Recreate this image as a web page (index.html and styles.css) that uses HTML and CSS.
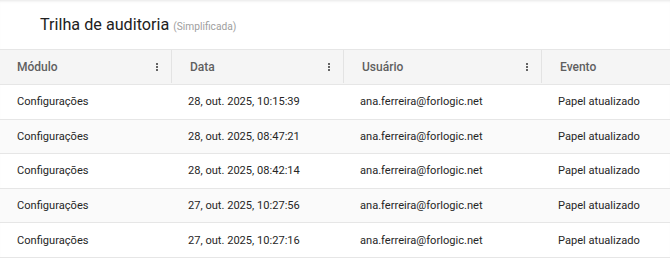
FILE: index.html
```html
<!DOCTYPE html>
<html lang="pt-BR">
<head>
<meta charset="utf-8">
<link rel="stylesheet" href="styles.css">
</head>
<body>
<div class="card">
  <div class="title-bar">
    <h1 class="title">Trilha de auditoria</h1>
    <span class="subtitle">(Simplificada)</span>
  </div>
  <div class="table">
    <div class="row head">
      <div class="cell c1"><span>Módulo</span><span class="kebab"><i></i><i></i><i></i></span></div>
      <div class="cell c2"><span>Data</span><span class="kebab"><i></i><i></i><i></i></span></div>
      <div class="cell c3"><span>Usuário</span><span class="kebab"><i></i><i></i><i></i></span></div>
      <div class="cell c4"><span>Evento</span></div>
    </div>
    <div class="row">
      <div class="cell c1">Configurações</div>
      <div class="cell c2">28, out. 2025, 10:15:39</div>
      <div class="cell c3">ana.ferreira@forlogic.net</div>
      <div class="cell c4">Papel atualizado</div>
    </div>
    <div class="row alt">
      <div class="cell c1">Configurações</div>
      <div class="cell c2">28, out. 2025, 08:47:21</div>
      <div class="cell c3">ana.ferreira@forlogic.net</div>
      <div class="cell c4">Papel atualizado</div>
    </div>
    <div class="row">
      <div class="cell c1">Configurações</div>
      <div class="cell c2">28, out. 2025, 08:42:14</div>
      <div class="cell c3">ana.ferreira@forlogic.net</div>
      <div class="cell c4">Papel atualizado</div>
    </div>
    <div class="row alt">
      <div class="cell c1">Configurações</div>
      <div class="cell c2">27, out. 2025, 10:27:56</div>
      <div class="cell c3">ana.ferreira@forlogic.net</div>
      <div class="cell c4">Papel atualizado</div>
    </div>
    <div class="row">
      <div class="cell c1">Configurações</div>
      <div class="cell c2">27, out. 2025, 10:27:16</div>
      <div class="cell c3">ana.ferreira@forlogic.net</div>
      <div class="cell c4">Papel atualizado</div>
    </div>
  </div>
</div>
</body>
</html>
```

FILE: styles.css
```css
html, body {
  margin: 0;
  padding: 0;
  background: #ffffff;
  font-family: Roboto, "Liberation Sans", sans-serif;
}
.card {
  width: 670px;
  height: 258px;
  overflow: hidden;
  box-shadow: inset 0 3px 3px -2px rgba(0,0,0,0.10);
  background: #fff;
}
.title-bar {
  display: flex;
  align-items: baseline;
  gap: 4px;
  padding: 13px 0 0 40px;
  height: 49px;
  box-sizing: border-box;
}
.title {
  margin: 0;
  font-size: 16.2px;
  font-weight: 400;
  color: #212121;
  line-height: 24px;
}
.subtitle {
  font-size: 10.2px;
  color: #9e9e9e;
}
.table {
  border-top: 1px solid #e6e6e6;
}
.row {
  display: grid;
  grid-template-columns: 171px 172px 198px 1fr;
  height: 34.6px;
  box-sizing: border-box;
  border-bottom: 1px solid #e6e6e6;
  font-size: 11.1px;
  color: #262626;
}
.row.alt {
  background: #fafafa;
}
.row.head {
  height: 35px;
  padding-bottom: 1px;
  background: #f5f5f5;
  font-weight: 500;
  color: #5f5f5f;
  font-size: 12px;
}
.row.head .cell + .cell {
  border-left: 1px solid #e3e3e3;
}
.cell {
  display: flex;
  align-items: center;
  justify-content: space-between;
  padding: 0 13px 0 17px;
  white-space: nowrap;
}
.row.head .cell { padding-left: 18px; }
.row.head .cell.c1 { padding-left: 17px; }
.kebab {
  display: flex;
  flex-direction: column;
  gap: 1px;
}
.kebab i {
  display: block;
  width: 2px;
  height: 2px;
  background: #333;
  border-radius: 1px;
}
```
